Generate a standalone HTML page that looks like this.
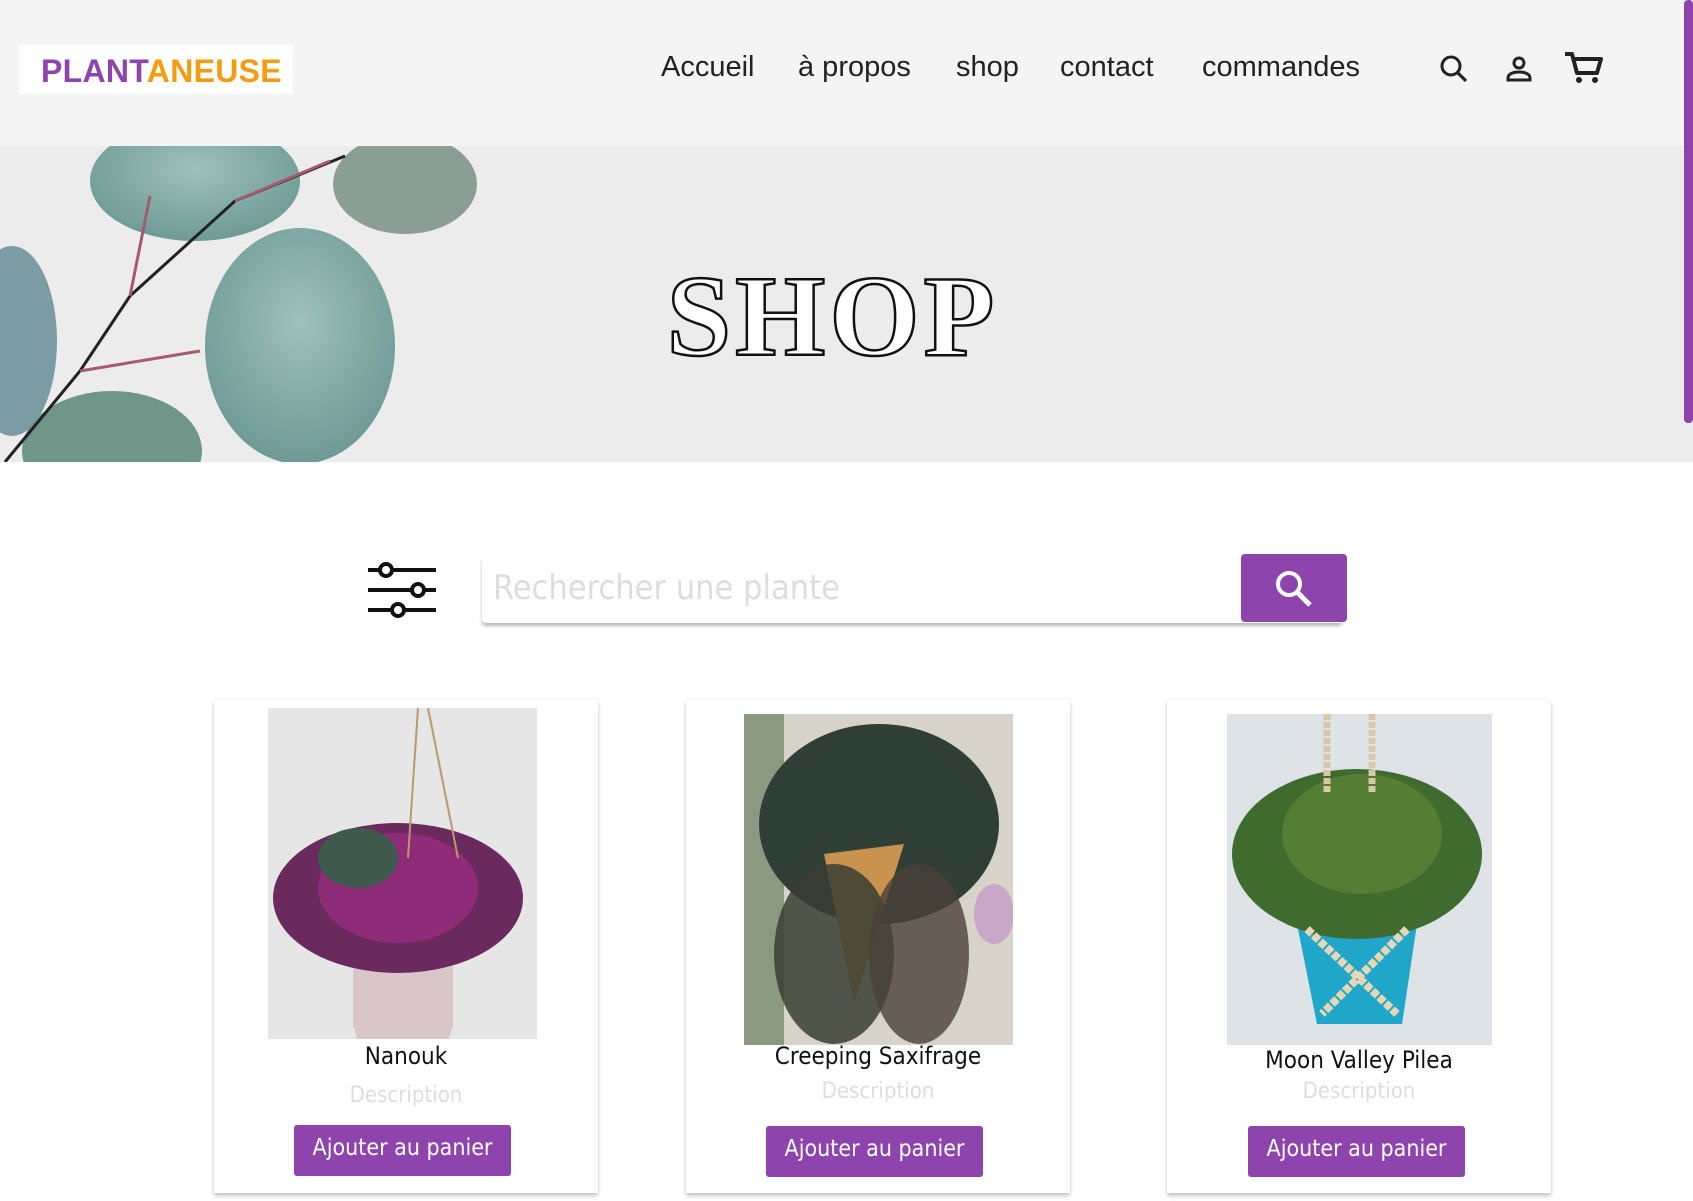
<!DOCTYPE html>
<html><head><meta charset="utf-8"><style>
*{margin:0;padding:0;box-sizing:border-box}
body{width:1693px;height:1201px;overflow:hidden;background:#fff;font-family:"DejaVu Sans Condensed","Liberation Sans",sans-serif;position:relative}
.hdr{position:absolute;left:0;top:0;width:1693px;height:146px;background:#f4f4f4}
.logo{position:absolute;left:19px;top:45px;width:274px;height:49px;background:#fff;font-family:"Liberation Sans",sans-serif;font-weight:bold;font-size:32px;line-height:52px;padding-left:22px;color:#8e44ad;letter-spacing:0.3px}
.logo span{color:#f39c12}
.nav a{position:absolute;top:51px;font-family:"Liberation Sans",sans-serif;font-size:29px;color:#222;text-decoration:none}
.sb{position:absolute;left:1684px;top:0;width:9px;height:423px;background:#8e44ad;border-radius:4px;z-index:5}
.hero{position:absolute;left:0;top:146px;width:1693px;height:316px;background:#ececec}
.shop{position:absolute;left:0;width:1693px;text-align:center;font-family:"Liberation Serif",serif;font-weight:bold;font-size:116px;color:#fff;-webkit-text-stroke:2.5px #111;letter-spacing:4px;transform:translateX(-14px)}
.card{position:absolute;top:700px;width:384px;height:493px;background:#fff;box-shadow:0 3px 4px rgba(0,0,0,.22),0 0 2px rgba(0,0,0,.08)}
.img{position:absolute}
.nm{position:absolute;width:100%;text-align:center;font-size:24px;color:#111}
.ds{position:absolute;width:100%;text-align:center;font-size:22px;color:#ddd}
.btn{position:absolute;width:217px;height:51px;background:#8e44ad;color:#fff;font-size:23px;text-align:center;line-height:46px;border-radius:3px}
</style></head><body>
<div class="hdr">
<div class="logo">PLANT<span>ANEUSE</span></div>
<div class="nav"><a style="left:661px">Accueil</a><a style="left:798px">à propos</a><a style="left:956px">shop</a><a style="left:1060px">contact</a><a style="left:1202px">commandes</a></div>
<svg style="position:absolute;left:1438px;top:53px" width="32" height="32" viewBox="0 0 32 32"><circle cx="13" cy="13" r="9" fill="none" stroke="#222" stroke-width="3"/><line x1="19.5" y1="19.5" x2="28" y2="28" stroke="#222" stroke-width="3.2"/></svg>
<svg style="position:absolute;left:1504px;top:54px" width="30" height="30" viewBox="0 0 30 30"><circle cx="15" cy="9" r="5" fill="none" stroke="#222" stroke-width="3"/><path d="M4 26v-2c0-4 5-6 11-6s11 2 11 6v2z" fill="none" stroke="#222" stroke-width="3"/></svg>
<svg style="position:absolute;left:1563px;top:50px" width="40" height="36" viewBox="0 0 40 36"><path d="M2 4h7l5 19h20l4-14H11" fill="none" stroke="#222" stroke-width="4" stroke-linejoin="round"/><circle cx="16" cy="30" r="3" fill="#222"/><circle cx="32" cy="30" r="3" fill="#222"/></svg>
</div>
<div class="sb"></div>
<div class="hero">
<svg width="520" height="316" style="position:absolute;left:0;top:0">
<defs><radialGradient id="g" cx="50%" cy="40%" r="60%"><stop offset="0" stop-color="#9fc1bd"/><stop offset="1" stop-color="#6e9a95"/></radialGradient></defs>
<ellipse cx="195" cy="35" rx="105" ry="60" fill="url(#g)"/>
<ellipse cx="405" cy="38" rx="72" ry="50" fill="#8a9e95"/>
<ellipse cx="300" cy="200" rx="95" ry="118" fill="url(#g)"/>
<ellipse cx="12" cy="195" rx="45" ry="95" fill="#7b9ca3"/>
<ellipse cx="112" cy="305" rx="90" ry="60" fill="#6f9688"/>
<path d="M5 316 L80 225 L130 150 L235 55 L345 10" fill="none" stroke="#222" stroke-width="3"/>
<path d="M80 225 L200 205 M130 150 L150 50 M235 55 L330 15" fill="none" stroke="#a55a6e" stroke-width="3"/>
</svg>
<div class="shop" style="top:105px">SHOP</div>
</div>
<svg style="position:absolute;left:366px;top:562px" width="72" height="56" viewBox="0 0 72 56"><g stroke="#111" stroke-width="4" fill="#fff"><line x1="2" y1="8" x2="70" y2="8"/><line x1="2" y1="28" x2="70" y2="28"/><line x1="2" y1="48" x2="70" y2="48"/><circle cx="20" cy="8" r="6"/><circle cx="52" cy="28" r="6"/><circle cx="32" cy="48" r="6"/></g></svg>
<div style="position:absolute;left:482px;top:556px;width:860px;height:67px;background:#fff;box-shadow:0 3px 3px rgba(0,0,0,.28);border-radius:4px"></div>
<div style="position:absolute;left:493px;top:568px;font-size:34px;color:#ddd">Rechercher une plante</div>
<div style="position:absolute;left:1241px;top:554px;width:106px;height:68px;background:#8e44ad;border-radius:4px"></div>
<svg style="position:absolute;left:1273px;top:568px" width="42" height="42" viewBox="0 0 42 42"><circle cx="16" cy="16" r="11" fill="none" stroke="#fff" stroke-width="4"/><line x1="24" y1="24" x2="37" y2="37" stroke="#fff" stroke-width="5"/></svg>

<div class="card" style="left:214px">
<svg class="img" style="left:54px;top:8px" width="269" height="331"><rect width="269" height="331" fill="#e6e6e6"/><ellipse cx="135" cy="310" rx="50" ry="50" fill="#d9c6c9"/><rect x="85" y="250" width="100" height="70" fill="#d9c6c9"/><ellipse cx="130" cy="190" rx="125" ry="75" fill="#6a2a5e"/><ellipse cx="130" cy="180" rx="80" ry="55" fill="#8f2c7a"/><ellipse cx="90" cy="150" rx="40" ry="30" fill="#3f5a4d"/><line x1="150" y1="0" x2="140" y2="150" stroke="#b89a6a" stroke-width="2"/><line x1="160" y1="0" x2="190" y2="150" stroke="#b89a6a" stroke-width="2"/></svg>
<div class="nm" style="top:342px">Nanouk</div><div class="ds" style="top:383px">Description</div>
<div class="btn" style="left:80px;top:425px">Ajouter au panier</div></div>

<div class="card" style="left:686px">
<svg class="img" style="left:58px;top:14px" width="269" height="331"><rect width="269" height="331" fill="#d8d3c9"/><rect x="0" y="0" width="40" height="331" fill="#8a9a80"/><ellipse cx="135" cy="110" rx="120" ry="100" fill="#2f3f36"/><path d="M80 140 L160 130 L110 290 Z" fill="#c9934f"/><ellipse cx="90" cy="240" rx="60" ry="90" fill="#3a3d33" opacity=".85"/><ellipse cx="175" cy="240" rx="50" ry="90" fill="#4a4038" opacity=".8"/><ellipse cx="250" cy="200" rx="20" ry="30" fill="#c9a7c7"/></svg>
<div class="nm" style="top:342px">Creeping Saxifrage</div><div class="ds" style="top:379px">Description</div>
<div class="btn" style="left:80px;top:426px">Ajouter au panier</div></div>

<div class="card" style="left:1167px">
<svg class="img" style="left:60px;top:14px" width="265" height="331"><rect width="265" height="331" fill="#dde3e6"/><path d="M70 210 L190 210 L175 310 L90 310 Z" fill="#1fa6c8"/><ellipse cx="130" cy="140" rx="125" ry="85" fill="#3f6b2e"/><ellipse cx="135" cy="120" rx="80" ry="60" fill="#557d34"/><line x1="100" y1="0" x2="100" y2="80" stroke="#d9c7a7" stroke-width="7" stroke-dasharray="6 2"/><line x1="145" y1="0" x2="145" y2="80" stroke="#d9c7a7" stroke-width="7" stroke-dasharray="6 2"/><path d="M80 215 L170 300 M180 215 L95 300" stroke="#e6d6b6" stroke-width="8" stroke-dasharray="7 2"/></svg>
<div class="nm" style="top:346px">Moon Valley Pilea</div><div class="ds" style="top:379px">Description</div>
<div class="btn" style="left:81px;top:426px">Ajouter au panier</div></div>
</body></html>
